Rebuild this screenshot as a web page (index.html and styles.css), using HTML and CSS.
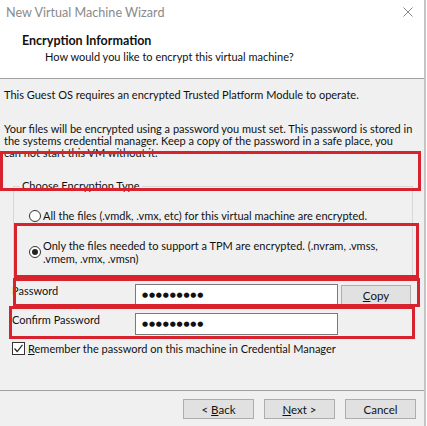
FILE: index.html
```html
<!DOCTYPE html>
<html lang="en">
<head>
  <meta charset="UTF-8">
  <title>New Virtual Machine Wizard</title>
  <link rel="stylesheet" href="styles.css">
</head>
<body>
  <div class="window">
    <div class="titlebar">
      <span class="title">New Virtual Machine Wizard</span>
      <svg class="close" width="10" height="10" viewBox="0 0 10 10">
        <path d="M0.5 0.5 L9.5 9.5 M9.5 0.5 L0.5 9.5" stroke="#8a8a8a" stroke-width="1"/>
      </svg>
    </div>

    <div class="header">
      <h1>Encryption Information</h1>
      <div class="subtitle">How would you like to encrypt this virtual machine?</div>
    </div>

    <div class="content">
      <p class="intro">This Guest OS requires an encrypted Trusted Platform Module to operate.</p>
      <p class="note">Your files will be encrypted using a password you must set. This password is stored in<br>the systems credential manager. Keep a copy of the password in a safe place, you<br>can not start this VM without it.</p>

      <fieldset class="group">
        <legend>Choose Encryption Type</legend>
        <label class="radio">
          <span class="dot"></span>
          <span>All the files (.vmdk, .vmx, etc) for this virtual machine are encrypted.</span>
        </label>
        <label class="radio">
          <span class="dot checked"></span>
          <span>Only the files needed to support a TPM are encrypted. (.nvram, .vmss,<br>.vmem, .vmx, .vmsn)</span>
        </label>
      </fieldset>

      <div class="fields">
        <div class="field-label">Password</div>
        <div class="input">●●●●●●●●●</div>
        <button class="btn copy" type="button"><u>C</u>opy</button>

        <div class="field-label">Confirm Password</div>
        <div class="input">●●●●●●●●●</div>
      </div>

      <label class="check">
        <span class="box">
          <svg width="11" height="11" viewBox="0 0 11 11">
            <path d="M1.5 5.5 L4.2 8.5 L9.5 1.8" fill="none" stroke="#222" stroke-width="1.2"/>
          </svg>
        </span>
        <span><u>R</u>emember the password on this machine in Credential Manager</span>
      </label>
    </div>

    <div class="footer">
      <button class="btn" type="button">&lt; <u>B</u>ack</button>
      <button class="btn" type="button"><u>N</u>ext &gt;</button>
      <button class="btn" type="button">Cancel</button>
    </div>

    <!-- red annotation frames drawn over the dialog -->
    <div class="mark" style="left:0;top:151px;width:421px;height:40px"></div>
    <div class="mark" style="left:14px;top:223px;width:405px;height:55px"></div>
    <div class="mark" style="left:13px;top:278px;width:407px;height:29px"></div>
    <div class="mark" style="left:9px;top:306px;width:406px;height:33px"></div>
  </div>
</body>
</html>
```

FILE: styles.css
```css
body {
  margin: 0;
  background: #ffffff;
  font-family: Lato, 'Liberation Sans', sans-serif;
  font-size: 11px;
  color: #111;
}
.window {
  position: relative;
  width: 424px;
  height: 426px;
  border-right: 2px solid #c4c4c4;
  display: flex;
  flex-direction: column;
  background: #f0f0f0;
  overflow: hidden;
}
.titlebar {
  height: 26px;
  background: #fff;
  display: flex;
  align-items: center;
  justify-content: space-between;
  padding: 0 11px 2px 6px;
  box-sizing: border-box;
}
.title {
  color: #8a8a8a;
  font-size: 12.6px;
}
.header {
  height: 44px;
  background: #fff;
  border-bottom: 1px solid #a0a0a0;
  padding: 8px 0 0 22px;
}
.header h1 {
  margin: 0;
  font-size: 12.5px;
  font-weight: bold;
  line-height: 14px;
}
.subtitle {
  margin: 2px 0 0 23px;
  line-height: 14px;
}
.content {
  flex: 1;
  padding: 9px 0 0 0;
}
.intro {
  margin: 0 0 0 4px;
  line-height: 14px;
}
.note {
  margin: 21px 0 0 4px;
  line-height: 12px;
  white-space: nowrap;
}
.group {
  margin: 21px 0 0 13px;
  width: 400px;
  box-sizing: border-box;
  border: 1px solid #d8d8d8;
  padding: 0 6px 14px 6px;
}
.group legend {
  padding: 0 2px;
  line-height: 12px;
}
.radio {
  display: flex;
  align-items: center;
  gap: 2px;
  margin: 17px 0 0 9px;
  line-height: 13px;
  white-space: nowrap;
}
.radio + .radio {
  margin-top: 17px;
}
.dot {
  width: 10px;
  height: 10px;
  border: 1px solid #333;
  border-radius: 50%;
  background: #fff;
  display: flex;
  align-items: center;
  justify-content: center;
  flex: none;
}
.dot.checked::after {
  content: "";
  width: 6px;
  height: 6px;
  border-radius: 50%;
  background: #222;
}
.fields {
  display: grid;
  grid-template-columns: 123px 203px 73px;
  grid-template-rows: 22px 22px;
  row-gap: 7px;
  margin: 4px 0 0 12px;
}
.field-label {
  line-height: 14px;
}
.input {
  background: #fff;
  border: 1px solid #7a7a7a;
  box-sizing: border-box;
  padding-left: 6px;
  font-family: 'DejaVu Sans', sans-serif;
  font-size: 7px;
  letter-spacing: 0.8px;
  line-height: 20px;
  color: #111;
}
.btn {
  font-family: inherit;
  font-size: 11.5px;
  color: #111;
  background: #e1e1e1;
  border: 1px solid #adadad;
  height: 20px;
  padding: 0;
  width: 71px;
}
.copy {
  width: 70px;
  margin: 1px 0 0 3px;
}
.check {
  display: flex;
  align-items: center;
  gap: 3px;
  margin: 7px 0 0 12px;
  line-height: 13px;
}
.box {
  width: 11px;
  height: 11px;
  border: 1px solid #333;
  background: #fff;
  display: flex;
}
.footer {
  border-top: 1px solid #a0a0a0;
  padding: 8px 8px 7px 0;
  display: flex;
  justify-content: flex-end;
  gap: 10px;
}
.mark {
  position: absolute;
  border: 3px solid #d8232f;
  box-sizing: border-box;
}
```
